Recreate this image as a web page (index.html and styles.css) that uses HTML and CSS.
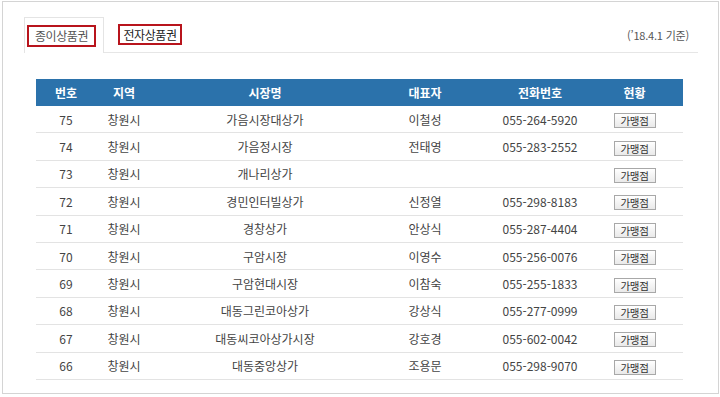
FILE: index.html
```html
<!DOCTYPE html>
<html lang="ko">
<head>
<meta charset="utf-8">
<link rel="stylesheet" href="styles.css">
</head>
<body>
<div class="frame">
  <div class="tabs">
    <div class="tab active"><span class="mark mark-a">종이상품권</span></div>
    <div class="tab"><span class="mark mark-b">전자상품권</span></div>
    <div class="date">(’18.4.1 기준)</div>
  </div>
  <div class="table">
    <div class="row head">
      <div>번호</div><div>지역</div><div>시장명</div><div>대표자</div><div>전화번호</div><div>현황</div><div></div>
    </div>
    <div class="row"><div>75</div><div>창원시</div><div>가음시장대상가</div><div>이철성</div><div>055-264-5920</div><div><span class="btn">가맹점</span></div><div></div></div>
    <div class="row"><div>74</div><div>창원시</div><div>가음정시장</div><div>전태영</div><div>055-283-2552</div><div><span class="btn">가맹점</span></div><div></div></div>
    <div class="row"><div>73</div><div>창원시</div><div>개나리상가</div><div></div><div></div><div><span class="btn">가맹점</span></div><div></div></div>
    <div class="row"><div>72</div><div>창원시</div><div>경민인터빌상가</div><div>신정열</div><div>055-298-8183</div><div><span class="btn">가맹점</span></div><div></div></div>
    <div class="row"><div>71</div><div>창원시</div><div>경창상가</div><div>안상식</div><div>055-287-4404</div><div><span class="btn">가맹점</span></div><div></div></div>
    <div class="row"><div>70</div><div>창원시</div><div>구암시장</div><div>이영수</div><div>055-256-0076</div><div><span class="btn">가맹점</span></div><div></div></div>
    <div class="row"><div>69</div><div>창원시</div><div>구암현대시장</div><div>이참숙</div><div>055-255-1833</div><div><span class="btn">가맹점</span></div><div></div></div>
    <div class="row"><div>68</div><div>창원시</div><div>대동그린코아상가</div><div>강상식</div><div>055-277-0999</div><div><span class="btn">가맹점</span></div><div></div></div>
    <div class="row"><div>67</div><div>창원시</div><div>대동씨코아상가시장</div><div>강호경</div><div>055-602-0042</div><div><span class="btn">가맹점</span></div><div></div></div>
    <div class="row"><div>66</div><div>창원시</div><div>대동중앙상가</div><div>조용문</div><div>055-298-9070</div><div><span class="btn">가맹점</span></div><div></div></div>
  </div>
</div>
</body>
</html>
```
FILE: styles.css
```css
* { box-sizing: border-box; }
html, body { margin: 0; padding: 0; background: #fff; }
body {
  font-family: "Noto Sans CJK KR", "Noto Sans", sans-serif;
  font-size: 12px;
  color: #444;
}
.frame {
  margin: 1px 0 0 2px;
  width: 717px;
  height: 393px;
  border: 1px solid #d4d4d4;
  padding: 15px 20px 0 21px;
}
.tabs {
  display: flex;
  align-items: flex-end;
  height: 36px;
  border-bottom: 1px solid #e6e6e6;
}
.tab {
  height: 35px;
  padding: 7px 0 0 3px;
}
.tab.active {
  width: 80px;
  height: 36px;
  margin-bottom: -1px;
  border: 1px solid #e4e4e4;
  border-bottom: none;
  background: #fff;
  padding: 7px 0 0 2px;
}
.tab + .tab { margin-left: 11px; }
.mark {
  display: inline-flex;
  align-items: center;
  justify-content: center;
  height: 22px;
  border: 2px solid #b8141c;
  font-size: 12px;
  line-height: 1;
  letter-spacing: -0.4px;
}
.mark-a { width: 69px; color: #555; }
.mark-b { width: 64px; color: #222; height: 21px; }
.date {
  margin-left: auto;
  align-self: center;
  padding-right: 9px;
  margin-top: 0;
  font-size: 11px;
  color: #555;
  letter-spacing: -0.2px;
}
.table {
  margin: 26px 0 0 12px;
  width: 647px;
}
.row {
  display: grid;
  grid-template-columns: 60px 56px 226px 94px 136px 53px 1fr;
  align-items: center;
  height: 27.4px;
  border-bottom: 1px solid #e3e3e3;
  text-align: center;
}
.row.head {
  height: 27px;
  background: #2b72ab;
  color: #fff;
  font-weight: bold;
  border-bottom: none;
}
.btn {
  display: inline-block;
  width: 42px;
  height: 15px;
  line-height: 13px;
  border: 1px solid #a8a8a8;
  background: linear-gradient(#ffffff, #e9e9e9);
  font-size: 10.5px;
  color: #333;
  letter-spacing: -0.3px;
  vertical-align: middle;
}
```
